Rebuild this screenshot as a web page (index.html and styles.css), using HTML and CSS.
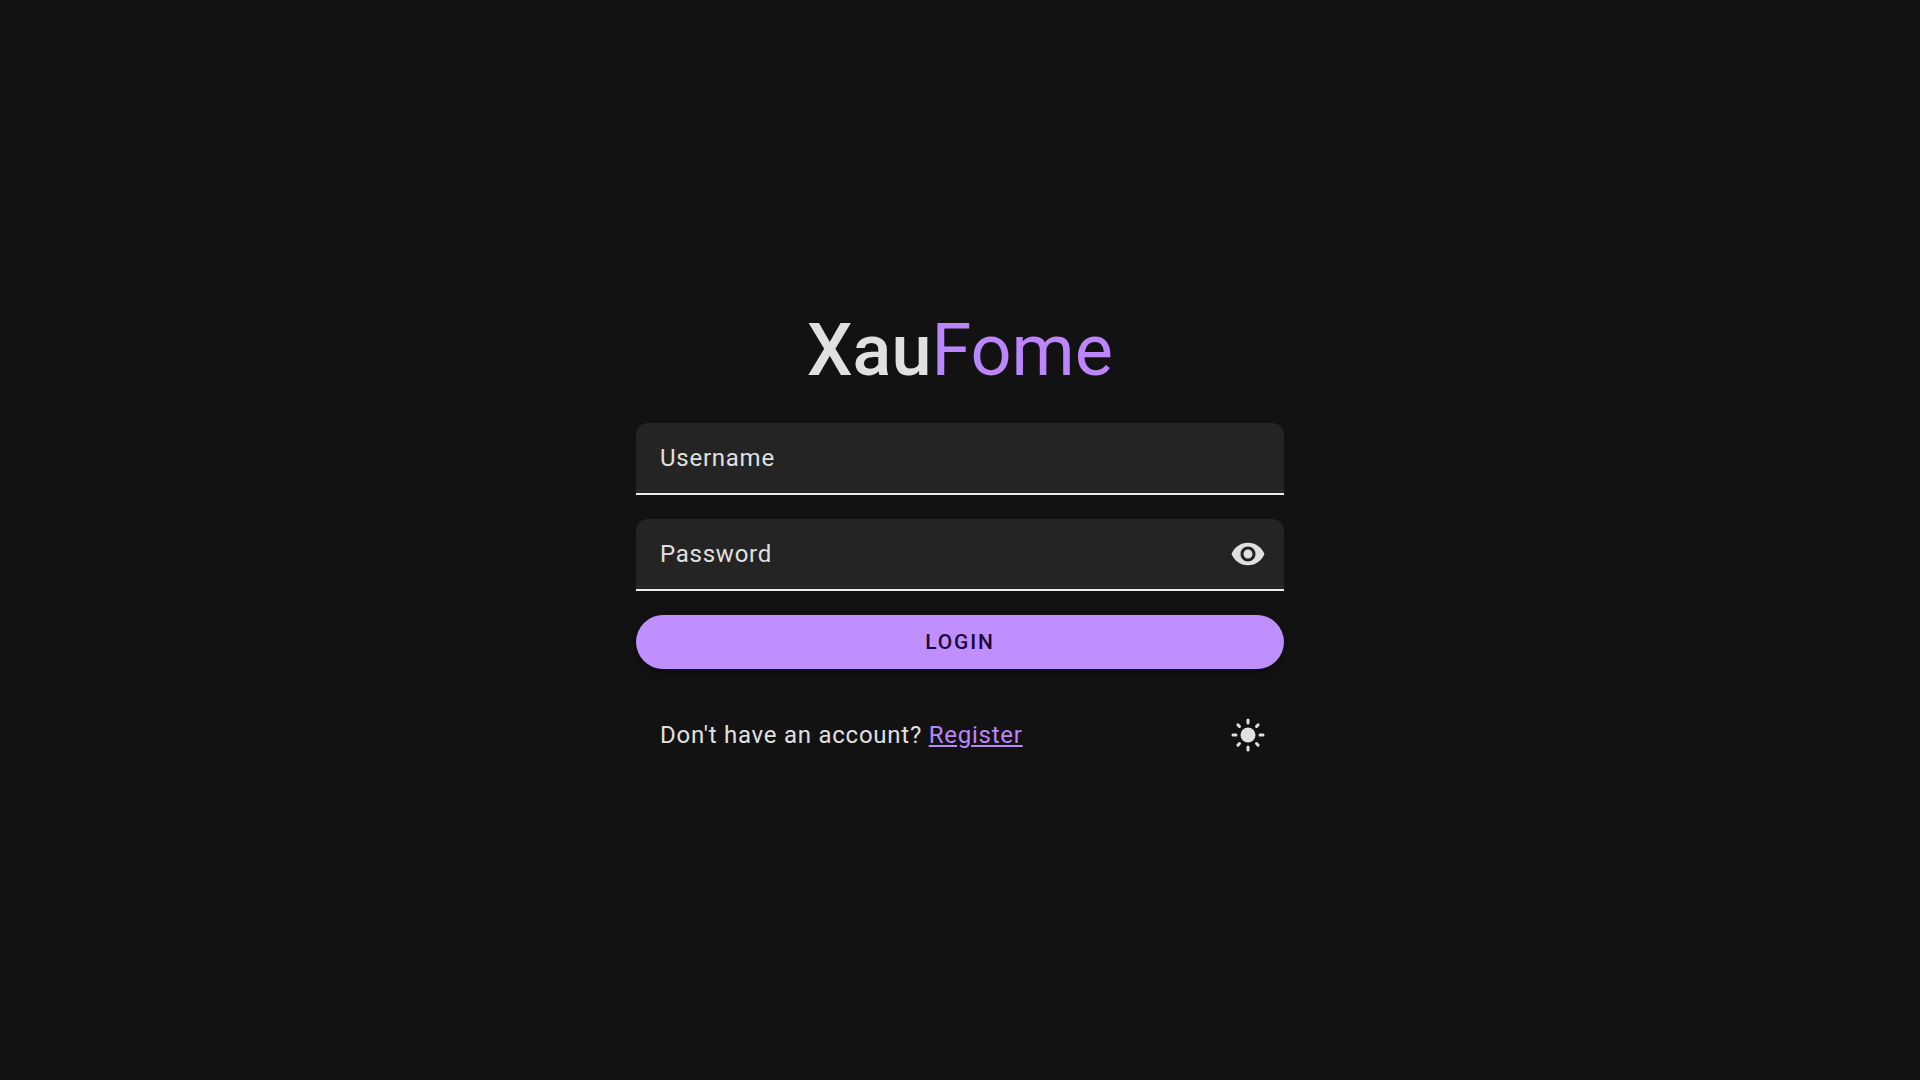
FILE: index.html
```html
<!DOCTYPE html>
<html lang="en">
<head>
<meta charset="utf-8">
<meta name="viewport" content="width=device-width, initial-scale=1">
<title>XauFome</title>
<link rel="stylesheet" href="styles.css">
</head>
<body>
<main class="login">
  <h1 class="brand"><strong class="brand-lead">Xau</strong><span class="brand-accent">Fome</span></h1>
  <form class="form">
    <div class="field">
      <label class="field-label" for="username">Username</label>
      <input class="field-input" id="username" name="username" type="text" autocomplete="username">
    </div>
    <div class="field">
      <label class="field-label" for="password">Password</label>
      <input class="field-input" id="password" name="password" type="password" autocomplete="current-password">
      <button class="icon-button" type="button" aria-label="Show password">
        <svg class="icon" viewBox="0 0 24 24" aria-hidden="true"><path d="M12 4.5C7 4.5 2.73 7.61 1 12c1.73 4.39 6 7.5 11 7.5s9.27-3.11 11-7.5c-1.73-4.39-6-7.5-11-7.5zM12 17c-2.76 0-5-2.24-5-5s2.24-5 5-5 5 2.24 5 5-2.24 5-5 5zm0-8c-1.66 0-3 1.34-3 3s1.34 3 3 3 3-1.34 3-3-1.34-3-3-3z"/></svg>
      </button>
    </div>
    <button class="submit" type="submit">LOGIN</button>
  </form>
  <div class="footer">
    <p class="prompt">Don't have an account? <a class="link" href="#register">Register</a></p>
    <button class="icon-button" type="button" aria-label="Switch to light theme">
      <svg class="icon" viewBox="0 0 24 24" aria-hidden="true">
        <circle cx="12" cy="12" r="5"/>
        <path class="rays" d="M12 2v2M12 20v2M2 12h2M20 12h2M5.28 5.28l1.06 1.06M17.66 17.66l1.06 1.06M5.28 18.72l1.06-1.06M17.66 6.34l1.06-1.06"/>
      </svg>
    </button>
  </div>
</main>
</body>
</html>
```
FILE: styles.css
```css
* {
  box-sizing: border-box;
}

body {
  margin: 0;
  min-height: 100vh;
  display: grid;
  place-items: center;
  background: #121212;
  color: #e0e0e0;
  font-family: Roboto, "Liberation Sans", sans-serif;
  font-size: 24px;
  line-height: 28px;
  letter-spacing: 0.03125em;
}

.login {
  width: 100%;
  max-width: 648px;
  display: flex;
  flex-direction: column;
  gap: 30px;
}

.brand {
  margin: 0;
  font-size: 72px;
  line-height: 84px;
  font-weight: 400;
  letter-spacing: normal;
  text-align: center;
}

.brand-lead {
  font-weight: 500;
}

.brand-accent {
  color: #bb86fc;
}

.form {
  display: flex;
  flex-direction: column;
  gap: 24px;
}

/* The label and the input share the first grid cell. */
.field {
  display: grid;
  grid-template-columns: 1fr auto;
  grid-template-rows: 100%;
  align-items: center;
  height: 72px;
  background: #242424;
  border-bottom: 2px solid #ececec;
  border-radius: 12px 12px 0 0;
}

.field-label,
.field-input {
  grid-row: 1;
  grid-column: 1;
  padding: 0 24px;
}

.field-label {
  pointer-events: none;
}

.field-input {
  width: 100%;
  height: 100%;
  border: 0;
  outline: 0;
  background: transparent;
  color: inherit;
  font: inherit;
  letter-spacing: inherit;
}

.field:focus-within .field-label {
  visibility: hidden;
}

.icon-button {
  display: grid;
  place-items: center;
  width: 72px;
  height: 72px;
  padding: 0;
  border: 0;
  background: transparent;
  color: inherit;
  cursor: pointer;
}

.icon {
  width: 36px;
  height: 36px;
  fill: currentColor;
}

.rays {
  fill: none;
  stroke: currentColor;
  stroke-width: 2;
  stroke-linecap: round;
}

.submit {
  height: 54px;
  border: 0;
  border-radius: 27px;
  background: #bf8fff;
  box-shadow: 0 3px 6px rgba(0, 0, 0, 0.4);
  color: #1c0838;
  font: inherit;
  font-size: 21px;
  font-weight: 500;
  letter-spacing: 0.09em;
  cursor: pointer;
}

.footer {
  display: flex;
  align-items: center;
  justify-content: space-between;
  padding-left: 24px;
}

.prompt {
  margin: 0;
}

.link {
  color: #bb86fc;
}
```
